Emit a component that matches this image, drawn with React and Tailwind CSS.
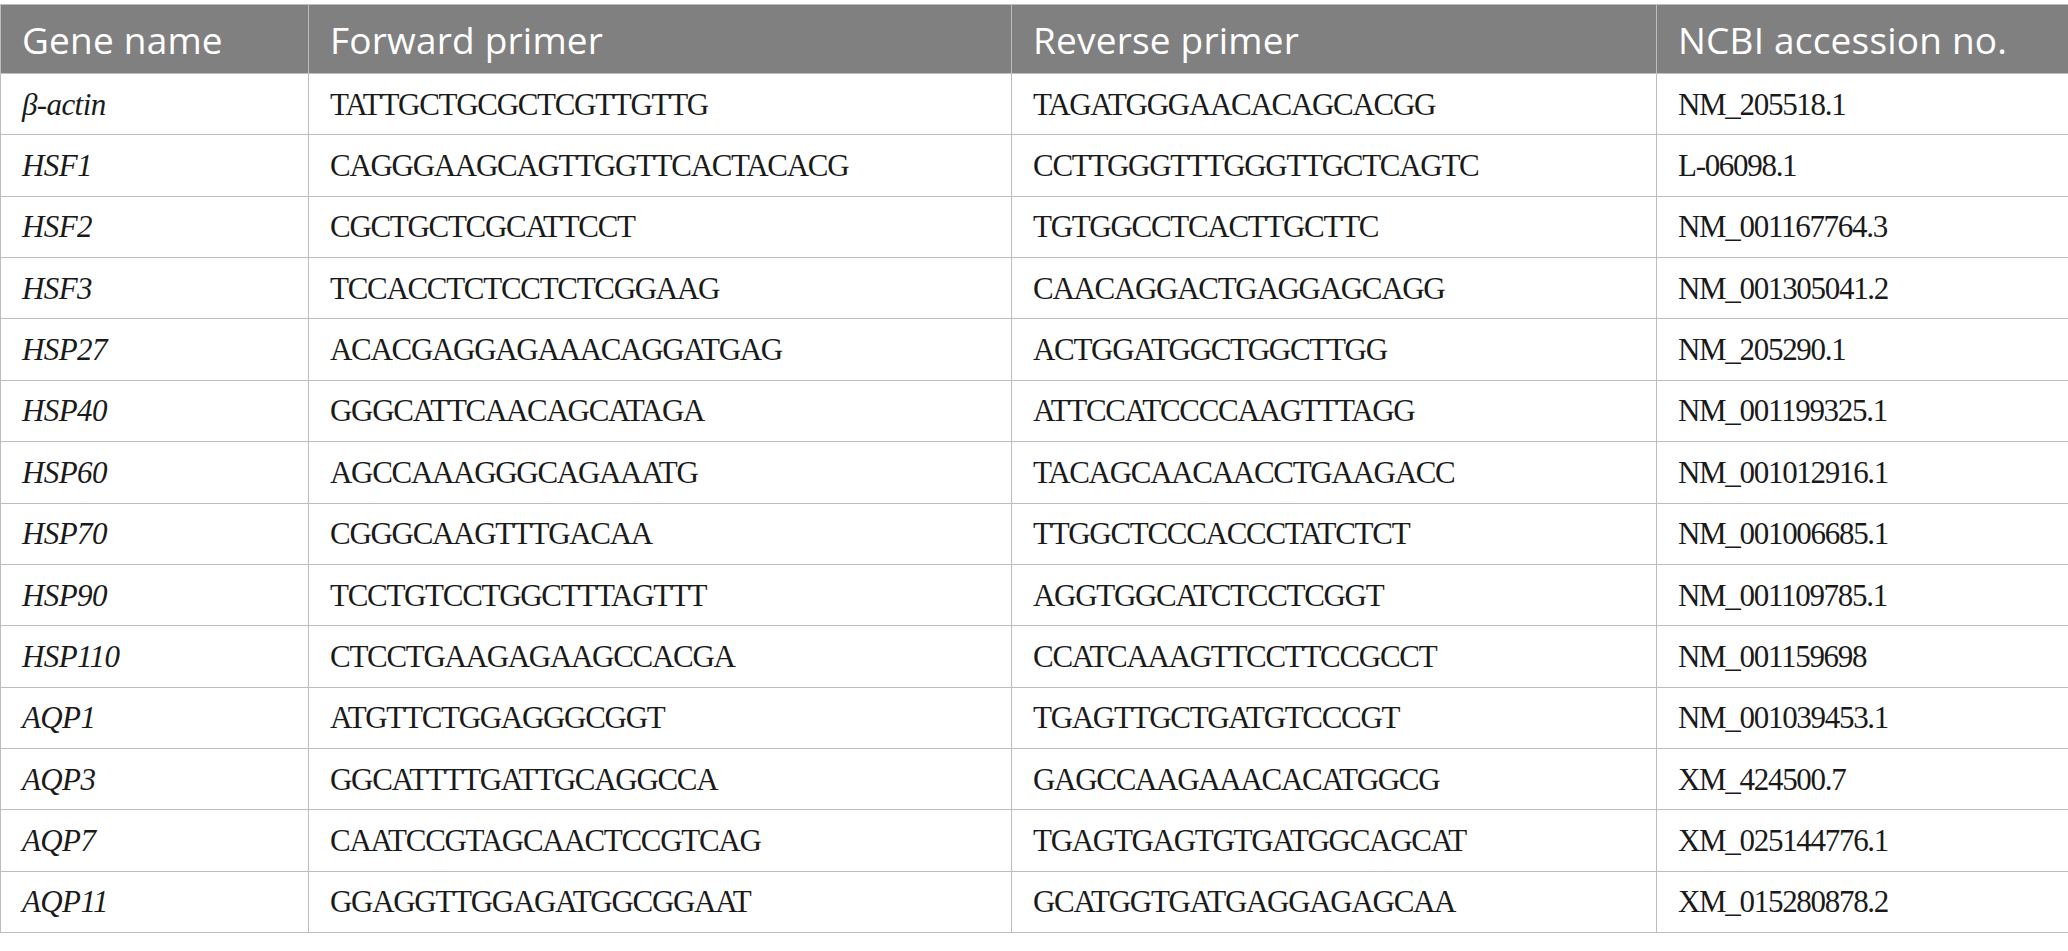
const rows = [
  ['β-actin', 'TATTGCTGCGCTCGTTGTTG', 'TAGATGGGAACACAGCACGG', 'NM_205518.1'],
  ['HSF1', 'CAGGGAAGCAGTTGGTTCACTACACG', 'CCTTGGGTTTGGGTTGCTCAGTC', 'L-06098.1'],
  ['HSF2', 'CGCTGCTCGCATTCCT', 'TGTGGCCTCACTTGCTTC', 'NM_001167764.3'],
  ['HSF3', 'TCCACCTCTCCTCTCGGAAG', 'CAACAGGACTGAGGAGCAGG', 'NM_001305041.2'],
  ['HSP27', 'ACACGAGGAGAAACAGGATGAG', 'ACTGGATGGCTGGCTTGG', 'NM_205290.1'],
  ['HSP40', 'GGGCATTCAACAGCATAGA', 'ATTCCATCCCCAAGTTTAGG', 'NM_001199325.1'],
  ['HSP60', 'AGCCAAAGGGCAGAAATG', 'TACAGCAACAACCTGAAGACC', 'NM_001012916.1'],
  ['HSP70', 'CGGGCAAGTTTGACAA', 'TTGGCTCCCACCCTATCTCT', 'NM_001006685.1'],
  ['HSP90', 'TCCTGTCCTGGCTTTAGTTT', 'AGGTGGCATCTCCTCGGT', 'NM_001109785.1'],
  ['HSP110', 'CTCCTGAAGAGAAGCCACGA', 'CCATCAAAGTTCCTTCCGCCT', 'NM_001159698'],
  ['AQP1', 'ATGTTCTGGAGGGCGGT', 'TGAGTTGCTGATGTCCCGT', 'NM_001039453.1'],
  ['AQP3', 'GGCATTTTGATTGCAGGCCA', 'GAGCCAAGAAACACATGGCG', 'XM_424500.7'],
  ['AQP7', 'CAATCCGTAGCAACTCCGTCAG', 'TGAGTGAGTGTGATGGCAGCAT', 'XM_025144776.1'],
  ['AQP11', 'GGAGGTTGGAGATGGCGGAAT', 'GCATGGTGATGAGGAGAGCAA', 'XM_015280878.2'],
]

const headers = ['Gene name', 'Forward primer', 'Reverse primer', 'NCBI accession no.']

export default function App() {
  return (
    <div className="w-[2068px] h-[951px] bg-white pt-[4px]">
      <table className="w-[2068px] border-collapse table-fixed">
        <colgroup>
          <col className="w-[308px]" />
          <col className="w-[703px]" />
          <col className="w-[645px]" />
          <col className="w-[412px]" />
        </colgroup>
        <thead>
          <tr className="h-[69px] bg-[#808080]">
            {headers.map((h) => (
              <th
                key={h}
                className="border border-[#bdbdbd] px-[21px] text-left align-middle font-normal text-white text-[37px] leading-none font-['Open_Sans',sans-serif] tracking-[0.2px]"
              >
                {h}
              </th>
            ))}
          </tr>
        </thead>
        <tbody>
          {rows.map((r) => (
            <tr key={r[0]} className="h-[61.36px]">
              <td className="border border-[#bdbdbd] px-[21px] align-middle italic text-[31px] leading-none text-[#1a1a1a] font-['Liberation_Serif',serif] tracking-[-0.6px]">
                {r[0]}
              </td>
              {r.slice(1).map((c, i) => (
                <td
                  key={i}
                  className="border border-[#bdbdbd] px-[21px] align-middle text-[31px] leading-none text-[#1a1a1a] font-['Liberation_Serif',serif] tracking-[-1.3px]"
                >
                  {c}
                </td>
              ))}
            </tr>
          ))}
        </tbody>
      </table>
    </div>
  )
}
